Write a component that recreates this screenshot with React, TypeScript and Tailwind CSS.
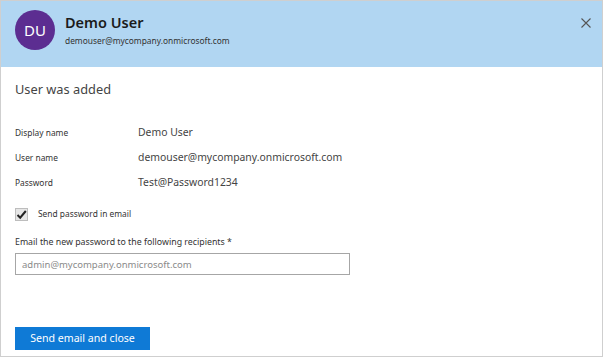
import React from 'react'

const details = [
  { label: 'Display name', value: 'Demo User' },
  { label: 'User name', value: 'demouser@mycompany.onmicrosoft.com' },
  { label: 'Password', value: 'Test@Password1234' },
]

export default function App() {
  return (
    <div
      className="w-[603px] h-[357px] border border-[#cfcfcf] bg-white flex flex-col overflow-hidden"
      style={{ fontFamily: '"Segoe UI", "Noto Sans", sans-serif' }}
    >
      <div className="h-[66px] bg-[#b1d6f2] flex items-start pl-[14px] pr-[11px] pt-[9px] shrink-0">
        <div className="w-[40px] h-[40px] rounded-full bg-[#5c2d91] flex items-center justify-center text-white text-[15px]">
          DU
        </div>
        <div className="ml-[10px] flex flex-col">
          <div className="text-[14.5px] leading-[20px] font-semibold text-[#1b1b1b] mt-[2px]">Demo User</div>
          <div className="text-[8.4px] leading-[11px] text-[#333] mt-[3px]">demouser@mycompany.onmicrosoft.com</div>
        </div>
        <div className="ml-auto mt-[8px]">
          <svg width="10" height="10" viewBox="0 0 10 10" className="text-[#555]">
            <path d="M0.5 0.5 L9.5 9.5 M9.5 0.5 L0.5 9.5" stroke="currentColor" strokeWidth="1.1" />
          </svg>
        </div>
      </div>

      <div className="flex flex-col px-[14px]">
        <div className="mt-[13px] text-[12.8px] leading-[18px] text-[#444]">User was added</div>

        <div className="mt-[25px] flex flex-col gap-[5px]">
          {details.map(d => (
            <div key={d.label} className="flex items-center h-[20px]">
              <div className="w-[123px] text-[8.4px] text-[#333]">{d.label}</div>
              <div className="text-[10.4px] text-[#444]">{d.value}</div>
            </div>
          ))}
        </div>

        <label className="mt-[14px] flex items-center h-[14px]">
          <span className="w-[13px] h-[13px] bg-[#e6e6e6] border border-[#bdbdbd] flex items-center justify-center">
            <svg width="11" height="11" viewBox="0 0 11 11">
              <path d="M1.5 6 L4.2 8.7 L9.8 2" fill="none" stroke="#222" strokeWidth="2" />
            </svg>
          </span>
          <span className="ml-[10px] text-[8.4px] text-[#333]">Send password in email</span>
        </label>

        <div className="mt-[15px] text-[8.8px] text-[#333] leading-[12px]">
          Email the new password to the following recipients *
        </div>
        <input
          className="mt-[5px] w-[335px] h-[22px] border border-[#a6a6a6] px-[6px] text-[9.5px] text-[#444] placeholder:text-[#8a8a8a] outline-none"
          placeholder="admin@mycompany.onmicrosoft.com"
        />

        <button className="mt-[52px] w-[135px] h-[23px] bg-[#0f7ad6] text-white text-[10.6px] flex items-center justify-center">
          Send email and close
        </button>
      </div>
    </div>
  )
}
